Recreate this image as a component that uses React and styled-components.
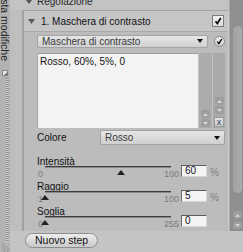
import React from 'react';
import styled, { createGlobalStyle } from 'styled-components';

const Global = createGlobalStyle`
  html, body { margin: 0; padding: 0; background: #bdbdbd; }
  body { font-family: "Liberation Sans Narrow", "Liberation Sans", Arial, sans-serif; }
`;

const Window = styled.div`
  width: 243px;
  height: 252px;
  display: flex;
  overflow: hidden;
  background: #bdbdbd;
  color: #161616;
  font-size: 10px;
`;

/* ---------- left vertical tab ---------- */
const SideTab = styled.div`
  width: 10px;
  flex: none;
  display: flex;
  flex-direction: column;
  align-items: flex-start;
  background: #b3b3b3;
`;
const TabLabel = styled.div`
  writing-mode: vertical-rl;
  font-family: "Liberation Sans", Arial, sans-serif;
  font-size: 10.5px;
  line-height: 9px;
  margin-top: -9px;
  padding-left: 0px;
  white-space: nowrap;
  color: #262626;
`;
const TabIcon = styled.svg`
  margin: 9px 0 0 2px;
  flex: none;
`;
const Grip = styled.div`
  flex: 1;
  width: 3px;
  margin: 2px 0 0 6px;
  background-image: repeating-linear-gradient(to bottom, #8e8e8e 0 1px, #d2d2d2 1px 2px);
`;
const ResizeGrip = styled.svg`
  flex: none;
  margin: 0 0 0 2px;
`;

/* ---------- main column ---------- */
const Main = styled.div`
  flex: 1;
  display: flex;
  flex-direction: column;
`;
const Upper = styled.div`
  height: 231px;
  display: flex;
`;
const PanelColumn = styled.div`
  flex: 1;
  display: flex;
  flex-direction: column;
  background: #bebebe;
`;
const TopHeader = styled.div`
  height: 10px;
  flex: none;
  overflow: hidden;
  display: flex;
  align-items: flex-start;
  padding-left: 16px;
  gap: 5px;
  background: #c3c3c3;
`;
const TopHeaderText = styled.span`
  line-height: 10px;
  margin-top: -3px;
  color: #2a2a2a;
`;
const PanelWrap = styled.div`
  flex: 1;
  display: flex;
  padding-left: 12px;
`;
const Panel = styled.div`
  flex: 1;
  display: flex;
  flex-direction: column;
  background: #bcbcbc;
  border-left: 2px solid #a2a2a2;
  border-top: 1px solid #a4a4a4;
  border-right: 1px solid #cdcdcd;
`;
const SectionHeader = styled.div`
  height: 20px;
  flex: none;
  display: flex;
  align-items: center;
  padding: 0 4px 0 4px;
  background: #c5c5c5;
  border-bottom: 1px solid #a9a9a9;
`;
const SectionTitle = styled.span`
  flex: 1;
  margin-left: 6px;
  color: #111;
`;
const CheckBox = styled.div`
  width: 10px;
  height: 10px;
  border: 1px solid #7c7c7c;
  background: linear-gradient(#f0f0f0, #dcdcdc);
  display: flex;
  align-items: center;
  justify-content: center;
`;
const Body = styled.div`
  flex: 1;
  display: flex;
  flex-direction: column;
  padding: 2px 3px 0 13px;
`;
const DropRow = styled.div`
  display: flex;
  align-items: center;
  gap: 6px;
  height: 14px;
`;
const Dropdown = styled.div`
  flex: ${p => (p.$fixed ? 'none' : '1')};
  width: ${p => (p.$fixed ? `${p.$fixed}px` : 'auto')};
  height: ${p => p.$h || 13}px;
  box-sizing: border-box;
  display: flex;
  align-items: center;
  padding: 0 4px 0 4px;
  border: 1px solid #a3a3a3;
  border-radius: 2px;
  background: linear-gradient(#e6e6e6, #d0d0d0);
  color: #3a3a3a;
`;
const DropText = styled.span`
  flex: 1;
`;
const RoundCheck = styled.div`
  width: 9px;
  height: 9px;
  border-radius: 50%;
  border: 1px solid #8a8a8a;
  background: linear-gradient(#eeeeee, #cfcfcf);
  display: flex;
  align-items: center;
  justify-content: center;
`;
const ListRow = styled.div`
  margin-top: 5px;
  height: 75px;
  display: flex;
`;
const ListBox = styled.div`
  flex: 1;
  background: #f3f3f3;
  border-top: 1px solid #9a9a9a;
  border-left: 1px solid #a5a5a5;
  padding: 2px 2px;
  color: #141414;
`;
const ListCol = styled.div`
  width: ${p => p.$w}px;
  display: flex;
  flex-direction: column;
  justify-content: flex-end;
  align-items: center;
  gap: ${p => p.$gap || 1}px;
  padding-bottom: 1px;
  background: ${p => p.$bg};
  border-left: 1px solid #c2c2c2;
`;
const MiniBtn = styled.div`
  width: 9px;
  height: 8px;
  border-radius: 2px;
  background: #9d9d9d;
  display: flex;
  align-items: center;
  justify-content: center;
`;
const XBtn = styled.div`
  width: 10px;
  height: 10px;
  margin-top: 2px;
  box-sizing: border-box;
  background: linear-gradient(#e2e2e2, #c8c8c8);
  border: 1px solid #9a9a9a;
  font-family: "Liberation Sans", Arial, sans-serif;
  font-size: 9px;
  line-height: 8px;
  text-align: center;
  color: #33406c;
`;
const ColorRow = styled.div`
  margin-top: 2px;
  height: 16px;
  display: flex;
  align-items: flex-start;
`;
const ColorLabel = styled.span`
  width: 63px;
  line-height: 16px;
  color: #111;
`;
const Sliders = styled.div`
  margin-top: 11px;
  display: flex;
  flex-direction: column;
`;
const SliderRow = styled.div`
  display: grid;
  grid-template-columns: 142px 26px auto;
  grid-template-rows: 9px 16px;
  column-gap: 2px;
`;
const SliderLabel = styled.span`
  grid-column: 1;
  grid-row: 1;
  line-height: 10px;
  color: #111;
`;
const TrackArea = styled.div`
  grid-column: 1;
  grid-row: 2;
  position: relative;
`;
const Track = styled.div`
  margin: 0 8px 0 8px;
  height: 2px;
  background: linear-gradient(#3c3c3c 50%, #8a8a8a 50%);
  position: relative;
`;
const Thumb = styled.svg`
  position: absolute;
  top: 4px;
  margin-left: -4px;
`;
const Scale = styled.div`
  display: flex;
  justify-content: space-between;
  margin-top: 2px;
  padding-left: 1px;
  font-size: 9px;
  line-height: 9px;
  color: #7b7b7b;
`;
const NumInput = styled.div`
  grid-column: 2;
  grid-row: 2;
  margin-top: -1px;
  height: 12px;
  box-sizing: border-box;
  background: #f4f4f4;
  border: 1px solid #d6d6d6;
  border-top-color: #5c5c5c;
  border-left-color: #6c6c6c;
  padding-left: 3px;
  line-height: 10px;
  color: #12122c;
`;
const Unit = styled.span`
  grid-column: 3;
  grid-row: 2;
  margin-left: 1px;
  margin-top: 2px;
  line-height: 9px;
  color: #808080;
`;

/* ---------- scrollbar ---------- */
const ScrollBar = styled.div`
  width: 14px;
  flex: none;
  display: flex;
  flex-direction: column;
  align-items: flex-end;
  background: #8f8f8f;
  border-left: 1px solid #a9a9a9;
  box-sizing: border-box;
`;
const ScrollThumb = styled.div`
  margin-top: 26px;
  width: 9px;
  height: 167px;
  border-radius: 5px;
  background: linear-gradient(90deg, #a2a2a2, #ababab);
  margin-right: 1px;
`;
const ScrollArrow = styled.div`
  width: 9px;
  height: 8px;
  margin: ${p => p.$mt}px 1px 0 0;
  border-radius: 4px;
  background: #9e9e9e;
  display: flex;
  align-items: center;
  justify-content: center;
`;

/* ---------- footer ---------- */
const Footer = styled.div`
  flex: 1;
  display: flex;
  align-items: flex-start;
  padding: 2px 0 0 15px;
  background: #c4c4c4;
`;
const PillButton = styled.button`
  height: 15px;
  padding: 0 9px;
  border-radius: 8px;
  border: 1px solid #8c8c8c;
  background: linear-gradient(#eeeeee, #c9c9c9);
  font-family: "Liberation Sans Narrow", "Liberation Sans", Arial, sans-serif;
  font-size: 10.5px;
  line-height: 13px;
  color: #111;
`;

const Tri = ({ down, color = '#555', w = 6, h = 4 }) => (
  <svg width={w} height={h} viewBox={`0 0 ${w} ${h}`}>
    <polygon points={down ? `0,0 ${w},0 ${w / 2},${h}` : `0,${h} ${w},${h} ${w / 2},0`} fill={color} />
  </svg>
);

const sliders = [
  { label: 'Intensità', min: 0, max: 100, value: 60, unit: '%' },
  { label: 'Raggio', min: 1, max: 100, value: 5, shownPos: 1, unit: '%' },
  { label: 'Soglia', min: 0, max: 255, value: 0, unit: '' },
];

export default function App() {
  return (
    <>
      <Global />
      <Window>
        <SideTab>
          <TabLabel>Lista modifiche</TabLabel>
          <TabIcon width="6" height="6" viewBox="0 0 6 6">
            <rect x="0.5" y="0.5" width="5" height="5" fill="#e4e4e4" stroke="#8a8a8a" />
            <polygon points="5.5,2 5.5,5.5 2,5.5" fill="#6a6a6a" />
          </TabIcon>
          <Grip />
          <ResizeGrip width="8" height="10" viewBox="0 0 8 10">
            <path d="M0 4 L6 10 M0 7 L3 10 M0 1 L8 9" stroke="#8a8a8a" strokeWidth="0.8" />
          </ResizeGrip>
        </SideTab>
        <Main>
          <Upper>
            <PanelColumn>
              <TopHeader>
                <Tri down />
                <TopHeaderText>Regolazione</TopHeaderText>
              </TopHeader>
              <PanelWrap>
                <Panel>
                  <SectionHeader>
                    <Tri down w={7} h={5} color="#5a5a5a" />
                    <SectionTitle>1. Maschera di contrasto</SectionTitle>
                    <CheckBox>
                      <svg width="8" height="8" viewBox="0 0 8 8">
                        <path d="M1.5 4.2 L3.3 6.5 L6.8 1" stroke="#000" strokeWidth="1.6" fill="none" />
                      </svg>
                    </CheckBox>
                  </SectionHeader>
                  <Body>
                    <DropRow>
                      <Dropdown $fixed={171}>
                        <DropText>Maschera di contrasto</DropText>
                        <Tri down w={6} h={4} color="#111" />
                      </Dropdown>
                      <RoundCheck>
                        <svg width="7" height="7" viewBox="0 0 7 7">
                          <path d="M1.3 3.6 L2.9 5.6 L5.8 1" stroke="#000" strokeWidth="1.4" fill="none" />
                        </svg>
                      </RoundCheck>
                    </DropRow>
                    <ListRow>
                      <ListBox>Rosso, 60%, 5%, 0</ListBox>
                      <ListCol $w={13} $bg="#acacac">
                        <MiniBtn><Tri w={5} h={3} color="#d6d6d6" /></MiniBtn>
                        <MiniBtn><Tri down w={5} h={3} color="#d6d6d6" /></MiniBtn>
                      </ListCol>
                      <ListCol $w={12} $bg="#a9a9a9">
                        <MiniBtn><Tri w={5} h={3} color="#d6d6d6" /></MiniBtn>
                        <MiniBtn><Tri down w={5} h={3} color="#d6d6d6" /></MiniBtn>
                        <XBtn>x</XBtn>
                      </ListCol>
                    </ListRow>
                    <ColorRow>
                      <ColorLabel>Colore</ColorLabel>
                      <Dropdown $h={15}>
                        <DropText>Rosso</DropText>
                        <Tri down w={6} h={4} color="#111" />
                      </Dropdown>
                    </ColorRow>
                    <Sliders>
                      {sliders.map(s => {
                        const pos = s.shownPos ?? s.value;
                        const pct = ((pos - s.min) / (s.max - s.min)) * 100;
                        return (
                          <SliderRow key={s.label}>
                            <SliderLabel>{s.label}</SliderLabel>
                            <TrackArea>
                              <Track>
                                <Thumb width="8" height="5" viewBox="0 0 8 5" style={{ left: `${pct}%` }}>
                                  <polygon points="0,5 8,5 4,0" fill="#222" />
                                </Thumb>
                              </Track>
                              <Scale>
                                <span>{s.min}</span>
                                <span>{s.max}</span>
                              </Scale>
                            </TrackArea>
                            <NumInput>{s.value}</NumInput>
                            <Unit>{s.unit}</Unit>
                          </SliderRow>
                        );
                      })}
                    </Sliders>
                  </Body>
                </Panel>
              </PanelWrap>
            </PanelColumn>
            <ScrollBar>
              <ScrollThumb />
              <ScrollArrow $mt={18}><Tri w={5} h={3} color="#d4d4d4" /></ScrollArrow>
              <ScrollArrow $mt={2}><Tri down w={5} h={3} color="#d4d4d4" /></ScrollArrow>
            </ScrollBar>
          </Upper>
          <Footer>
            <PillButton>Nuovo step</PillButton>
          </Footer>
        </Main>
      </Window>
    </>
  );
}
